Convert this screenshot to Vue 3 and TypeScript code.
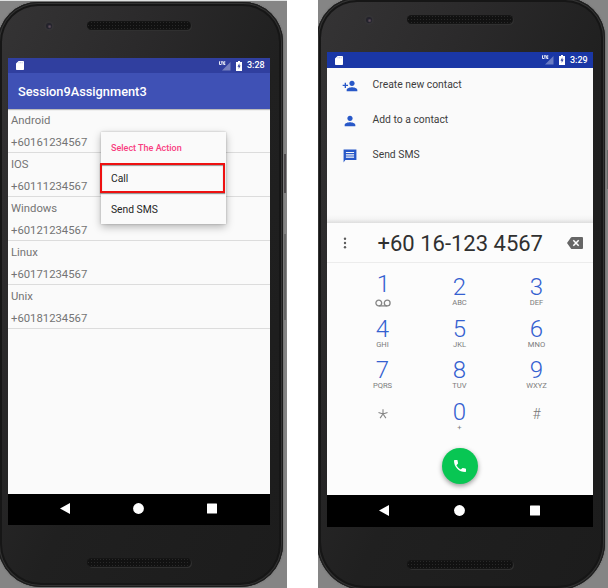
<script setup lang="ts">
interface Contact { name: string; phone: string }
interface Key { digit: string; letters: string; kind?: string }

const contacts: Contact[] = [
  { name: 'Android', phone: '+60161234567' },
  { name: 'IOS', phone: '+60111234567' },
  { name: 'Windows', phone: '+60121234567' },
  { name: 'Linux', phone: '+60171234567' },
  { name: 'Unix', phone: '+60181234567' },
]

const options: { label: string; path: string }[] = [
  { label: 'Create new contact', path: 'M15 12c2.2 0 4-1.8 4-4s-1.8-4-4-4-4 1.8-4 4 1.8 4 4 4zM6 10V7H4v3H1v2h3v3h2v-3h3v-2H6zm9 4c-2.7 0-8 1.3-8 4v2h16v-2c0-2.7-5.3-4-8-4z' },
  { label: 'Add to a contact', path: 'M12 12c2.2 0 4-1.8 4-4s-1.8-4-4-4-4 1.8-4 4 1.8 4 4 4zm0 2c-2.7 0-8 1.3-8 4v2h16v-2c0-2.7-5.3-4-8-4z' },
  { label: 'Send SMS', path: 'M1 1h22v18H4l-3 4zM5 5v2h14V5zM5 9v2h14V9zM5 13v2h14v-2z' },
]

const keys: Key[] = [
  { digit: '1', letters: '', kind: 'voicemail' },
  { digit: '2', letters: 'ABC' },
  { digit: '3', letters: 'DEF' },
  { digit: '4', letters: 'GHI' },
  { digit: '5', letters: 'JKL' },
  { digit: '6', letters: 'MNO' },
  { digit: '7', letters: 'PQRS' },
  { digit: '8', letters: 'TUV' },
  { digit: '9', letters: 'WXYZ' },
  { digit: '*', letters: '', kind: 'star' },
  { digit: '0', letters: '+' },
  { digit: '#', letters: '', kind: 'hash' },
]
</script>

<template>
  <main class="page">
    <section class="backdrop left">
      <div class="phone">
        <div class="bezel top">
          <span class="camera"></span>
          <span class="speaker"></span>
        </div>
        <div class="screen">
          <div class="status">
            <svg class="sd" viewBox="0 0 8 9"><path d="M2.6 0H7.2q.8 0 .8.8V8.2q0 .8-.8.8H.8Q0 9 0 8.200V2.600z" /><path class="slots" d="M3 1v1.300M4.600 1v1.300M6.200 1v1.300" /></svg>
            <svg class="signal" viewBox="0 0 12 10"><path class="wedge" d="M11.500 1v8.500H3z" /><path class="lte" d="M.5.300v3.200h1.500M1.700.8h2.400M2.900.8v3M6.300.8H4.700v2.700h1.600M4.700 2.100h1.500" /></svg>
            <svg class="battery" viewBox="0 0 6 10"><path d="M2 0h2v1h2v9H0V1h2z" /><path class="bolt" d="M3.400 2.300 1.500 5.700h1.200v2.300l1.900-3.400H3.400z" /></svg>
            <span class="clock">3:28</span>
          </div>
          <header class="appbar">Session9Assignment3</header>
          <div class="list">
            <div v-for="c in contacts" :key="c.name" class="contact">
              <span>{{ c.name }}</span>
              <span>{{ c.phone }}</span>
            </div>
            <div class="menu">
              <div class="menu-title">Select The Action</div>
              <div class="menu-item">Call</div>
              <div class="menu-item">Send SMS</div>
              <div class="marker"></div>
            </div>
          </div>
          <nav class="nav">
            <svg viewBox="0 0 10 11"><path d="M10 0v11L0 5.500z" /></svg>
            <svg viewBox="0 0 11 11"><circle cx="5.500" cy="5.500" r="5.400" /></svg>
            <svg viewBox="0 0 10 10"><rect width="10" height="10" rx=".5" /></svg>
          </nav>
        </div>
        <div class="bezel bottom"><span class="speaker"></span></div>
      </div>
      <i class="side power"></i>
      <i class="side volume"></i>
    </section>

    <section class="backdrop right">
      <div class="phone">
        <div class="bezel top">
          <span class="camera"></span>
          <span class="speaker"></span>
        </div>
        <div class="screen">
          <div class="status">
            <svg class="sd" viewBox="0 0 8 9"><path d="M2.600 0H7.200q.8 0 .8.8V8.200q0 .8-.8.8H.8Q0 9 0 8.200V2.600z" /><path class="slots" d="M3 1v1.300M4.600 1v1.300M6.200 1v1.300" /></svg>
            <svg class="signal" viewBox="0 0 12 10"><path class="wedge" d="M11.500 1v8.500H3z" /><path class="lte" d="M.5.300v3.200h1.500M1.700.8h2.400M2.900.8v3M6.300.8H4.700v2.700h1.600M4.700 2.100h1.500" /></svg>
            <svg class="battery" viewBox="0 0 6 10"><path d="M2 0h2v1h2v9H0V1h2z" /><path class="bolt" d="M3.400 2.300 1.500 5.700h1.200v2.300l1.900-3.400H3.400z" /></svg>
            <span class="clock">3:29</span>
          </div>
          <div class="options">
            <div v-for="o in options" :key="o.label" class="option">
              <svg viewBox="0 0 24 24"><path fill-rule="evenodd" :d="o.path" /></svg>
              <span>{{ o.label }}</span>
            </div>
          </div>
          <div class="dialer">
            <div class="number-row">
              <svg class="more" viewBox="0 0 4 12"><circle cx="2" cy="1.800" r="1.200" /><circle cx="2" cy="6" r="1.200" /><circle cx="2" cy="10.200" r="1.200" /></svg>
              <span class="number">+60 16-123 4567</span>
              <svg class="erase" viewBox="0 0 16 12"><path d="M5 0h10q1 0 1 1v10q0 1-1 1H5q-.7 0-1.100-.6L0 6 3.900.6Q4.300 0 5 0z" /><path class="cross" d="m6.300 3.200 5.400 5.600m0-5.600L6.300 8.800" /></svg>
            </div>
            <div class="keypad">
              <div v-for="k in keys" :key="k.digit" class="key" :class="k.kind">
                <svg v-if="k.kind === 'star'" class="asterisk" viewBox="0 0 10 10"><path d="M5 5V.2M5 5l4.500-1.500M5 5l2.900 4.100M5 5 2.100 9.100M5 5 .5 3.500" /></svg>
                <span v-else class="digit">{{ k.digit }}</span>
                <svg v-if="k.kind === 'voicemail'" class="tape" viewBox="0 0 16 8"><circle cx="3.800" cy="4" r="2.900" /><circle cx="12.200" cy="4" r="2.900" /><path d="M3.800 6.900h8.400" /></svg>
                <span v-else-if="k.letters" class="letters">{{ k.letters }}</span>
              </div>
            </div>
            <div class="call">
              <svg viewBox="0 0 24 24"><path d="M6.600 10.800c1.400 2.800 3.800 5.100 6.600 6.600l2.200-2.200c.3-.3.700-.4 1-.2 1.100.4 2.300.6 3.600.6.600 0 1 .4 1 1V20c0 .6-.4 1-1 1C10.600 21 3 13.400 3 4c0-.6.400-1 1-1h3.500c.6 0 1 .4 1 1 0 1.200.2 2.400.6 3.600.1.300 0 .7-.3 1z" /></svg>
            </div>
          </div>
          <nav class="nav">
            <svg viewBox="0 0 10 11"><path d="M10 0v11L0 5.500z" /></svg>
            <svg viewBox="0 0 11 11"><circle cx="5.500" cy="5.500" r="5.400" /></svg>
            <svg viewBox="0 0 10 10"><rect width="10" height="10" rx=".5" /></svg>
          </nav>
        </div>
        <div class="bezel bottom"><span class="speaker"></span></div>
      </div>
      <i class="side power"></i>
    </section>
  </main>
</template>

<style>
body { background: #fff; }
</style>

<style scoped>
* { box-sizing: border-box; }
.page {
  display: flex;
  justify-content: space-between;
  width: 608px;
  height: 588px;
  overflow: hidden;
  font-family: Roboto, "Liberation Sans", sans-serif;
}
svg { display: block; flex: none; }
.backdrop {
  position: relative;
  height: 588px;
  overflow: hidden;
  background: #858585;
}
.left { width: 287px; border-top: 1px solid #dfe1e1; }
.right { width: 290px; }
.phone {
  display: flex;
  flex-direction: column;
  flex: none;
  background: linear-gradient(115deg, #353435 0%, #2b2a2b 28%, #202020 55%, #1c1c1c 100%);
  box-shadow: inset 0 0 0 1px #1c1c1c, inset 0 0 0 2px #333, inset 0 0 0 4px #161616, 0 0 2px #555;
}
.left .phone { width: 285px; height: 585px; margin: 1px 0 0 -2px; padding: 0 13px 0 10px; border-radius: 40px 40px 43px 43px; }
.right .phone { width: 288px; height: 592px; margin: -2px 0 0 -1px; padding: 0 12px 0 10px; border-radius: 40px 40px 48px 48px; }
.bezel { display: flex; flex: none; }
.left .top { height: 56px; padding: 19px 0 0 36px; gap: 33px; }
.right .top { height: 54px; padding: 17px 0 0 37px; gap: 33px; }
.camera {
  width: 10px;
  height: 10px;
  border-radius: 50%;
  border: 2px solid #343335;
  background: radial-gradient(circle at 60% 60%, #5e4e5a 0 10%, #24232e 40%, #222225);
}
.speaker {
  width: 104px;
  height: 9px;
  border-radius: 5px;
  background-color: #111;
  background-image: radial-gradient(circle, #292929 .5px, transparent .8px);
  background-size: 3px 3px;
  box-shadow: inset 0 0 0 1px #151515, 1px 1px 0 #303030;
}
.right .speaker { width: 106px; }
.bottom .speaker { margin-top: 33px; }
.left .bottom { padding-left: 79px; }
.right .bottom { padding-left: 80px; }
.screen { display: flex; flex-direction: column; background: #fafafa; flex: none; }
.left .screen { width: 262px; height: 467px; }
.right .screen { width: 266px; height: 475px; }

.status {
  display: flex;
  align-items: center;
  flex: none;
  color: #fff;
  background: #303f9f;
  height: 15px;
  padding: 0 5px 0 8px;
}
.right .status { height: 16px; background: #1a37a6; }
.sd { width: 8px; height: 9px; margin-right: auto; fill: #fff; }
.slots { stroke: #a8b0d8; stroke-width: .6; }
.signal { width: 12px; height: 10px; margin-right: 5px; }
.wedge { fill: #fff; fill-opacity: .34; }
.lte { fill: none; stroke: #fff; stroke-width: 1; opacity: .9; }
.battery { width: 6px; height: 10px; margin-right: 5px; fill: #fff; }
.bolt { fill: #303f9f; }
.clock { font-size: 9px; font-weight: 500; line-height: 15px; width: 18px; white-space: nowrap; }

.appbar {
  flex: none;
  height: 36px;
  padding-left: 10px;
  background: #3f51b5;
  color: #fff;
  font-size: 12.800px;
  font-weight: 500;
  line-height: 37px;
  box-shadow: 0 1px 1px rgba(0, 0, 0, .25);
}
.list { position: relative; height: 385px; flex: none; }
.contact {
  display: flex;
  flex-direction: column;
  gap: 7.500px;
  height: 44px;
  padding: 5px 0 0 3px;
  border-bottom: 1px solid #dcdcdc;
  color: #747474;
  font-size: 11.300px;
  line-height: 14px;
}
.menu {
  position: absolute;
  left: 93px;
  top: 23px;
  width: 125px;
  height: 92px;
  background: #fafafa;
  box-shadow: 0 3px 8px rgba(0, 0, 0, .28), 0 0 2px rgba(0, 0, 0, .22);
}
.menu-title, .menu-item { height: 31px; padding-left: 10px; line-height: 31px; }
.menu-title { color: #f84081; font-size: 9px; font-weight: 500; line-height: 33px; }
.menu-item { color: #252525; font-size: 10.300px; }
.marker {
  position: absolute;
  left: -1px;
  top: 31px;
  width: 125px;
  height: 30px;
  border: 2px solid #ee1111;
  box-shadow: inset 0 1px 1px #999, 0 1px 1px #999;
}
.nav {
  display: flex;
  align-items: center;
  justify-content: space-between;
  flex: 1;
  background: #000;
  padding: 0 53px 3px 52px;
}
.right .nav { padding: 0 53px 1px 52px; }
.nav svg { width: 11px; height: 11px; fill: #fff; }
.nav svg:first-child, .nav svg:last-child { width: 10px; }
.side { position: absolute; width: 2px; background: #4d4a4c; }
.left .power { left: 284px; top: 153px; height: 39px; }
.left .volume { left: 284px; top: 233px; height: 86px; background: #666; }
.right .power { left: 289px; top: 150px; height: 39px; width: 1px; background: #666; }

.options { height: 155px; background: linear-gradient(#fafafa 0 147px, #f4f4f4 151px, #dedede 155px); flex: none; }
.option {
  display: flex;
  align-items: center;
  gap: 14.500px;
  height: 35px;
  padding-left: 15px;
  color: #3d3d3d;
  font-size: 10.350px;
}
.option span { padding-bottom: 2px; }
.option svg { width: 16px; height: 16px; fill: #2858c8; }
.option:last-child svg { width: 14px; height: 14px; margin: 0 1px; }
.dialer { height: 272px; background: #fcfcfc; flex: none; }
.number-row {
  display: flex;
  align-items: center;
  height: 40px;
  padding: 0 10px 0 16px;
  border-bottom: 1px solid #ececec;
}
.more { width: 4px; height: 12px; fill: #5c5c5c; }
.number { width: 166px; margin-left: 30.500px; padding-top: 2px; color: #303030; font-size: 22px; line-height: 37px; white-space: nowrap; }
.erase { width: 16px; height: 12px; margin-left: auto; fill: #666; }
.cross { stroke: #fff; stroke-width: 1.500; fill: none; }
.keypad {
  display: grid;
  grid-template-columns: repeat(3, 77px);
  grid-auto-rows: 41.600px;
  padding-left: 17px;
  height: 186px;
  padding-top: 12px;
}
.key { display: flex; flex-direction: column; align-items: center; }
.digit { color: #3460d0; font-size: 24px; font-weight: 300; line-height: 24px; }
.letters { color: #7b7b7b; font-size: 7.600px; line-height: 8px; }
.voicemail .digit { margin-top: -3px; padding-left: 2px; }
.tape { width: 16px; height: 8px; margin-top: 2.500px; fill: none; stroke: #858585; stroke-width: 1.300; }
.asterisk { width: 10px; height: 10px; margin-top: 9px; fill: none; stroke: #858585; stroke-width: 1.100; }
.hash .digit { margin-top: 2px; color: #777; font-size: 14px; }
.call {
  display: flex;
  align-items: center;
  justify-content: center;
  width: 36px;
  height: 36px;
  margin: -1px 0 0 115px;
  border-radius: 50%;
  background: #08c653;
  box-shadow: 0 2px 5px rgba(0, 0, 0, .4);
}
.call svg { width: 16px; height: 16px; fill: #fff; }
</style>
